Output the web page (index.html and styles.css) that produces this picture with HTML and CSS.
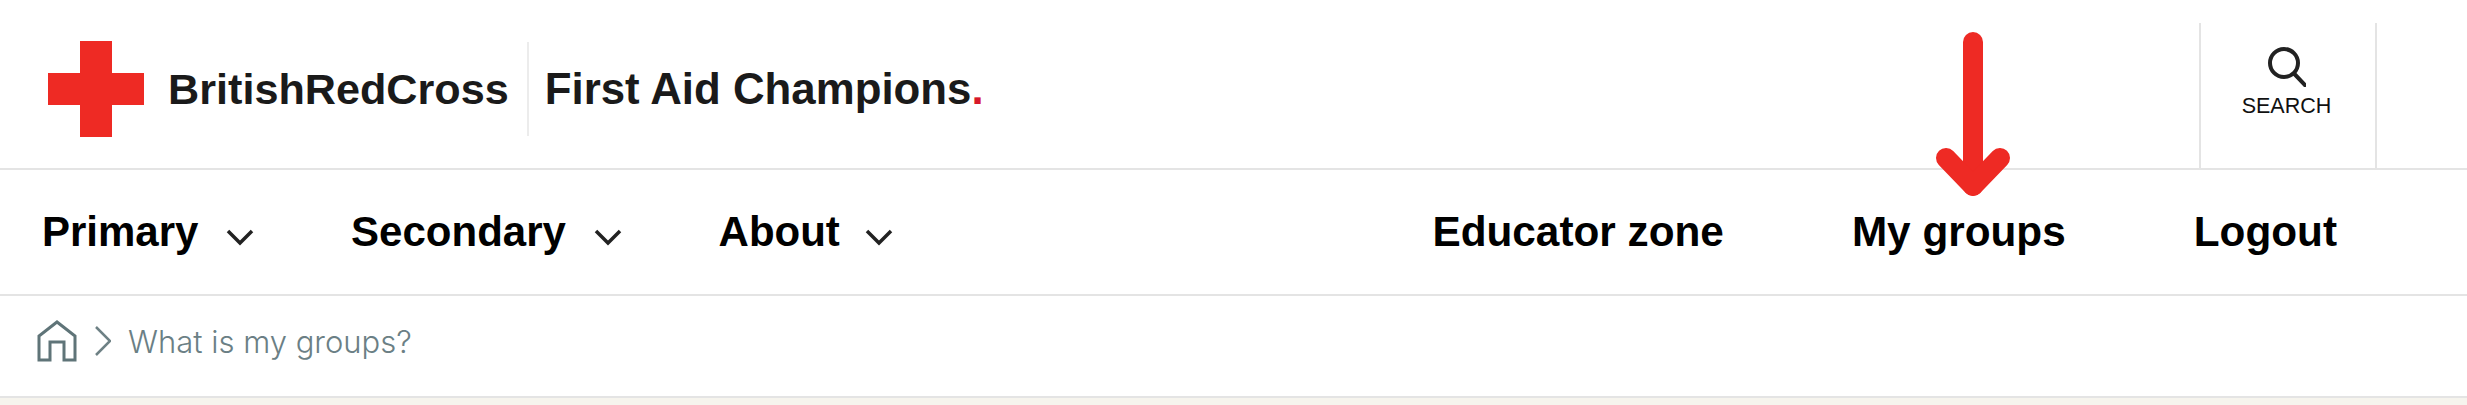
FILE: index.html
```html
<!DOCTYPE html>
<html>
<head>
    <title>First Aid Champions</title>
    <link rel="stylesheet" href="styles.css">
</head>
<body>
    <header class="topBar">
        <a class="logo" href="#">
            <svg class="logoCross" viewBox="0 0 96 96"><path d="M32 0h32v32h32v32H64v32H32V64H0V32h32z"/></svg>
            <span class="logoName">BritishRedCross</span>
            <span class="logoTitle">First Aid Champions<span class="logoDot">.</span></span>
        </a>
        <div class="searchBox">
            <svg class="searchIcon" viewBox="0 0 38 40"><circle cx="16" cy="16" r="14"/><path d="M26 26.500L37 38"/></svg>
            <span class="searchLabel">SEARCH</span>
        </div>
    </header>

    <nav class="mainNav">
        <ul class="navLeft">
            <li>Primary <svg class="chevron" viewBox="0 0 28 18"><path d="M2 3l12 12L26 3"/></svg></li>
            <li>Secondary <svg class="chevron" viewBox="0 0 28 18"><path d="M2 3l12 12L26 3"/></svg></li>
            <li>About <svg class="chevron chevronLast" viewBox="0 0 28 18"><path d="M2 3l12 12L26 3"/></svg></li>
        </ul>
        <ul class="navRight">
            <li>Educator zone</li>
            <li>My groups</li>
            <li>Logout</li>
        </ul>
    </nav>

    <div class="breadcrumb">
        <svg class="homeIcon" viewBox="0 0 40 42"><path d="M2 40V16L20 2l18 14v24H27V22H13v18z"/></svg>
        <svg class="crumbSep" viewBox="0 0 16 30"><path d="M1 1l14 14L1 29"/></svg>
        <span class="crumbText">What is my groups?</span>
    </div>

    <svg class="arrow" viewBox="0 0 74 175"><path d="M37 10v144"/><path d="M10 126l27 28 27-28"/></svg>
</body>
</html>
```

FILE: styles.css
```css
body {
    margin: 0;
    padding: 0;
    height: 405px;
    overflow: hidden;
    position: relative;
    background: #f6f4ed;
    font-family: 'Liberation Sans', Arial, sans-serif;
    color: #000;
}

.topBar {
    display: flex;
    justify-content: space-between;
    height: 168px;
    padding: 0 90px 0 48px;
    background: #fff;
    border-bottom: 2px solid #e4e4e4;
}
.logo {
    display: flex;
    align-items: center;
    padding-top: 10px;
    color: #1a1a1a;
    text-decoration: none;
    font-weight: bold;
}
.logoCross {
    width: 96px;
    height: 96px;
    fill: #ee2a24;
}
.logoName {
    margin-left: 24px;
    font-size: 43.2px;
}
.logoTitle {
    display: flex;
    align-items: center;
    height: 94px;
    margin-left: 18px;
    padding-left: 16px;
    border-left: 2px solid #ececec;
    font-size: 43.8px;
}
.logoDot { color: #d7182a; }

.searchBox {
    display: flex;
    flex-direction: column;
    align-items: center;
    box-sizing: border-box;
    width: 178px;
    height: 145px;
    margin-top: 23px;
    padding-right: 3px;
    border-left: 2px solid #e4e4e4;
    border-right: 2px solid #e4e4e4;
}
.searchIcon {
    width: 38px;
    height: 40px;
    margin-top: 24px;
    fill: none;
    stroke: #222;
    stroke-width: 4;
    stroke-linecap: round;
}
.searchLabel {
    margin-top: 7px;
    font-size: 21.5px;
    color: #111;
}

.mainNav {
    display: flex;
    justify-content: space-between;
    align-items: center;
    height: 124px;
    padding: 0 130px 0 42px;
    background: #fff;
    border-bottom: 2px solid #e4e4e4;
    font-size: 42px;
    font-weight: bold;
}
.mainNav ul {
    display: flex;
    margin: 0;
    padding: 0;
    list-style: none;
}
.navLeft { gap: 97px; }
.navRight {
    gap: 128px;
    padding-top: 6px;
    font-size: 42.3px;
}
.chevron {
    width: 28px;
    height: 18px;
    margin-left: 16px;
    fill: none;
    stroke: #222;
    stroke-width: 3.5;
}
.chevronLast { margin-left: 13px; }

.breadcrumb {
    display: flex;
    align-items: center;
    height: 102px;
    padding: 0 0 10px 37px;
    background: #fff;
    border-bottom: 2px solid #e4e4e4;
    box-sizing: border-box;
}
.homeIcon {
    width: 40px;
    height: 42px;
    fill: none;
    stroke: #5f7478;
    stroke-width: 3;
}
.crumbSep {
    width: 16px;
    height: 30px;
    margin-left: 18px;
    fill: none;
    stroke: #6e8185;
    stroke-width: 2.5;
}
.crumbText {
    margin-left: 17px;
    font-family: Inter, sans-serif;
    font-weight: 300;
    font-size: 31px;
    color: #6b7f85;
}

/* red annotation arrow sits over the nav */
.arrow {
    position: absolute;
    left: 1936px;
    top: 32px;
    width: 74px;
    height: 175px;
    fill: none;
    stroke: #ee2a24;
    stroke-width: 20;
    stroke-linecap: round;
    stroke-linejoin: round;
}
```
